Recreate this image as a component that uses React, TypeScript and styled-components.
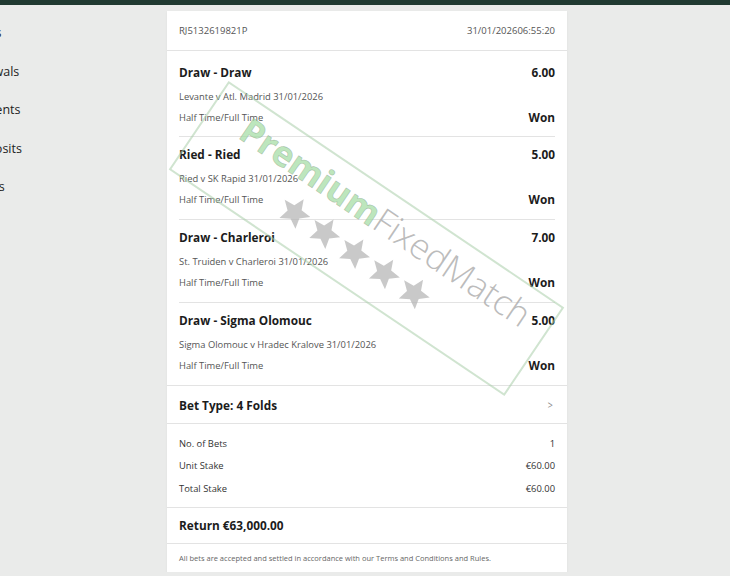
import styled, { createGlobalStyle } from "styled-components";

const GlobalStyle = createGlobalStyle`
  html, body {
    margin: 0;
    padding: 0;
    background: #eaebea;
  }
  body {
    font-family: "Open Sans", "Noto Sans", Arial, sans-serif;
    color: #222;
    overflow: hidden;
  }
`;

const TopBar = styled.div`
  background: #213a32;
  height: 5px;
`;

const Layout = styled.div`
  display: flex;
  align-items: flex-start;
  padding-top: 6px;
`;

const Sidebar = styled.ul`
  flex: 0 0 180px;
  min-width: 0;
  overflow: hidden;
  list-style: none;
  margin: 0 0 0 -150px;
  padding: 13px 0 0;
`;

const SideItem = styled.li`
  font-size: 12.5px;
  height: 38.5px;
  padding-left: 97px;
  white-space: nowrap;
  color: #222;
`;

const Card = styled.div`
  position: relative;
  flex: 0 0 400px;
  margin-left: 137px;
  background: #fff;
  box-shadow: 0 1px 2px rgba(0, 0, 0, 0.06);
  overflow: hidden;
`;

const Header = styled.div`
  display: flex;
  justify-content: space-between;
  align-items: center;
  height: 39px;
  padding: 0 12px;
  border-bottom: 1px solid #e3e3e3;
  font-size: 9.5px;
  color: #555;
`;

const Legs = styled.div`
  padding: 4px 12px 0;
  border-bottom: 1px solid #e3e3e3;
`;

const Leg = styled.div`
  padding: 7px 0 9px;
  & + & {
    border-top: 1px solid #e3e3e3;
  }
  &:first-child {
    padding-bottom: 8px;
  }
`;

const Row = styled.div<{ $h?: number; $gap?: number }>`
  display: flex;
  justify-content: space-between;
  align-items: center;
  height: ${(p) => p.$h ?? 20}px;
  margin-top: ${(p) => p.$gap ?? 0}px;
`;

const Strong = styled.span`
  font-size: 11.8px;
  font-weight: 700;
  color: #1c1c1c;
`;

const Muted = styled.span`
  font-size: 9.4px;
  color: #555;
`;

const BetType = styled.div`
  display: flex;
  justify-content: space-between;
  align-items: center;
  height: 37px;
  padding: 0 12px;
  border-bottom: 1px solid #e3e3e3;
`;

const Chevron = styled.span`
  font-size: 11px;
  color: #888;
  margin-right: 2px;
  transform: scaleX(0.8);
`;

const Summary = styled.div`
  padding: 8px 12px 7px;
  border-bottom: 1px solid #e3e3e3;
`;

const SummaryRow = styled.div`
  display: flex;
  justify-content: space-between;
  align-items: center;
  height: 22.5px;
  font-size: 9.4px;
  color: #333;
`;

const Return = styled.div`
  display: flex;
  align-items: center;
  height: 35px;
  padding: 0 12px;
  border-bottom: 1px solid #e3e3e3;
`;

const Footer = styled.div`
  height: 28px;
  display: flex;
  align-items: center;
  padding: 0 12px;
  font-size: 7.5px;
  color: #666;
`;

const Stamp = styled.div`
  position: absolute;
  left: -3px;
  top: 174px;
  width: 405px;
  height: 107px;
  box-sizing: border-box;
  border: 2px solid rgba(170, 205, 170, 0.55);
  transform: rotate(34deg);
  pointer-events: none;
  display: flex;
  flex-direction: column;
  align-items: center;
`;

const StampText = styled.div`
  font-family: "Open Sans", sans-serif;
  font-size: 35px;
  line-height: 1;
  margin-top: 9px;
  margin-left: 14px;
  white-space: nowrap;
`;

const StampGreen = styled.span`
  font-weight: 700;
  color: rgba(160, 220, 160, 0.7);
  -webkit-text-stroke: 0.6px rgba(130, 150, 130, 0.5);
`;

const StampGray = styled.span`
  font-weight: 300;
  color: rgba(170, 170, 170, 0.8);
`;

const Stars = styled.div`
  display: flex;
  gap: 1px;
  margin-top: 8px;
  margin-left: -4px;
`;

type LegData = {
  pick: string;
  odds: string;
  event: string;
};

const legs: LegData[] = [
  { pick: "Draw - Draw", odds: "6.00", event: "Levante v Atl. Madrid 31/01/2026" },
  { pick: "Ried - Ried", odds: "5.00", event: "Ried v SK Rapid 31/01/2026" },
  { pick: "Draw - Charleroi", odds: "7.00", event: "St. Truiden v Charleroi 31/01/2026" },
  { pick: "Draw - Sigma Olomouc", odds: "5.00", event: "Sigma Olomouc v Hradec Kralove 31/01/2026" },
];

function Star() {
  return (
    <svg width="35" height="34" viewBox="0 0 24 24">
      <path
        d="M12 1.5l3.1 7.2 7.8.6-5.9 5.1 1.8 7.6L12 18l-6.8 4 1.8-7.6-5.9-5.1 7.8-.6z"
        fill="rgba(180,180,180,0.72)"
      />
    </svg>
  );
}

export default function App() {
  return (
    <>
      <GlobalStyle />
      <TopBar />
      <Layout>
        <Sidebar>
          <SideItem>Free Bets</SideItem>
          <SideItem>Withdrawals</SideItem>
          <SideItem>Adjustments</SideItem>
          <SideItem>Net Deposits</SideItem>
          <SideItem>Bet Limits</SideItem>
        </Sidebar>
        <Card>
          <Header>
            <span>RJ5132619821P</span>
            <span>31/01/202606:55:20</span>
          </Header>
          <Legs>
            {legs.map((leg) => (
              <Leg key={leg.pick}>
                <Row>
                  <Strong>{leg.pick}</Strong>
                  <Strong>{leg.odds}</Strong>
                </Row>
                <Row $gap={4}>
                  <Muted>{leg.event}</Muted>
                </Row>
                <Row $h={22}>
                  <Muted>Half Time/Full Time</Muted>
                  <Strong>Won</Strong>
                </Row>
              </Leg>
            ))}
          </Legs>
          <BetType>
            <Strong>Bet Type: 4 Folds</Strong>
            <Chevron>&gt;</Chevron>
          </BetType>
          <Summary>
            <SummaryRow>
              <span>No. of Bets</span>
              <span>1</span>
            </SummaryRow>
            <SummaryRow>
              <span>Unit Stake</span>
              <span>€60.00</span>
            </SummaryRow>
            <SummaryRow>
              <span>Total Stake</span>
              <span>€60.00</span>
            </SummaryRow>
          </Summary>
          <Return>
            <Strong>Return €63,000.00</Strong>
          </Return>
          <Footer>
            All bets are accepted and settled in accordance with our Terms and Conditions and Rules.
          </Footer>
          <Stamp>
            <StampText>
              <StampGreen>Premium</StampGreen>
              <StampGray>FixedMatch</StampGray>
            </StampText>
            <Stars>
              <Star />
              <Star />
              <Star />
              <Star />
              <Star />
            </Stars>
          </Stamp>
        </Card>
      </Layout>
    </>
  );
}
